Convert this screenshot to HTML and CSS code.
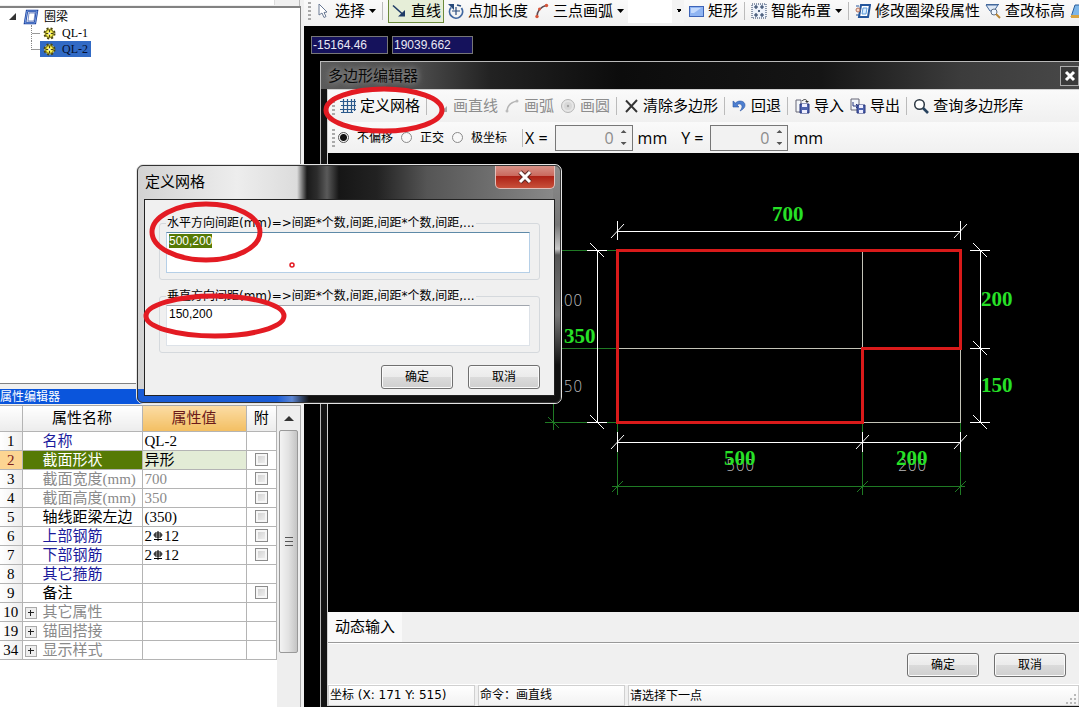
FILE: index.html
```html
<!DOCTYPE html>
<html lang="zh-CN">
<head>
<meta charset="utf-8">
<title>多边形编辑器</title>
<link rel="stylesheet" href="styles.css">
</head>
<body>
<div class="app">
  <aside class="sidebar">
    <div class="top-box"><div class="top-field"></div></div>
    <div class="tree">
      <div class="tree-row tree-root">
        <svg width="10" height="10" viewBox="0 0 10 10"><path d="M8 1v7H1z" fill="#333"/></svg>
        <svg width="16" height="16" viewBox="0 0 16 16"><path d="M4 2h10l-2 12H2z" fill="#fff" stroke="#1d3f9b" stroke-width="2.4"/><path d="M4 2h10l-2 12H2z" fill="none" stroke="#86b4f4" stroke-width=".8"/><path d="M6 4h6l-1 8H5z" fill="#fff" stroke="#2549a8" stroke-width=".6"/></svg>
        <span>圈梁</span>
      </div>
      <div class="tree-row tree-leaf">
        <i class="branch"></i>
        <span class="leaf"><svg width="13" height="13" viewBox="0 0 13 13"><circle cx="6.500" cy="6.500" r="5" fill="#fbf45a" stroke="#4a4510" stroke-width="2" stroke-dasharray="2 2"/><circle cx="6.500" cy="6.500" r="4" fill="#f6ee4b" stroke="#5b5514" stroke-width=".8"/><path d="M6.500 3v7M3 6.500h7" stroke="#4a4510"/><circle cx="6.500" cy="6.500" r="1.200" fill="#fff"/></svg>QL-1</span>
      </div>
      <div class="tree-row tree-leaf">
        <i class="branch"></i>
        <span class="leaf leaf-on"><svg width="13" height="13" viewBox="0 0 13 13"><circle cx="6.500" cy="6.500" r="5" fill="#fbf45a" stroke="#4a4510" stroke-width="2" stroke-dasharray="2 2"/><circle cx="6.500" cy="6.500" r="4" fill="#f6ee4b" stroke="#5b5514" stroke-width=".8"/><path d="M6.500 3v7M3 6.500h7" stroke="#4a4510"/><circle cx="6.500" cy="6.500" r="1.200" fill="#fff"/></svg>QL-2</span>
      </div>
    </div>
    <h2 class="panel-title">属性编辑器</h2>
    <div class="props">
      <table class="grid">
        <colgroup><col class="c-num"><col class="c-name"><col class="c-val"><col class="c-add"></colgroup>
        <thead><tr><th></th><th>属性名称</th><th class="th-on">属性值</th><th>附</th></tr></thead>
        <tbody>
          <tr><th>1</th><td class="name link">名称</td><td>QL-2</td><td></td></tr>
          <tr class="row-on"><th>2</th><td class="name">截面形状</td><td>异形</td><td class="tick"><input type="checkbox" aria-label="截面形状 附"></td></tr>
          <tr class="dim"><th>3</th><td class="name">截面宽度(mm)</td><td>700</td><td class="tick"><input type="checkbox" aria-label="截面宽度 附"></td></tr>
          <tr class="dim"><th>4</th><td class="name">截面高度(mm)</td><td>350</td><td class="tick"><input type="checkbox" aria-label="截面高度 附"></td></tr>
          <tr><th>5</th><td class="name">轴线距梁左边</td><td>(350)</td><td class="tick"><input type="checkbox" aria-label="轴线距梁左边 附"></td></tr>
          <tr><th>6</th><td class="name link">上部钢筋</td><td>2<svg class="rebar" width="12" height="11" viewBox="0 0 12 11"><path d="M3 2h6v4H3zM6 0v10M2 8.500h8M1.500 4h9" fill="none" stroke="#000"/></svg>12</td><td class="tick"><input type="checkbox" aria-label="上部钢筋 附"></td></tr>
          <tr><th>7</th><td class="name link">下部钢筋</td><td>2<svg class="rebar" width="12" height="11" viewBox="0 0 12 11"><path d="M3 2h6v4H3zM6 0v10M2 8.500h8M1.500 4h9" fill="none" stroke="#000"/></svg>12</td><td class="tick"><input type="checkbox" aria-label="下部钢筋 附"></td></tr>
          <tr><th>8</th><td class="name link">其它箍筋</td><td></td><td></td></tr>
          <tr><th>9</th><td class="name">备注</td><td></td><td class="tick"><input type="checkbox" aria-label="备注 附"></td></tr>
          <tr class="dim"><th>10</th><td class="group"><button class="expand" aria-label="展开 其它属性"></button>其它属性</td><td></td><td></td></tr>
          <tr class="dim"><th>19</th><td class="group"><button class="expand" aria-label="展开 锚固搭接"></button>锚固搭接</td><td></td><td></td></tr>
          <tr class="dim"><th>34</th><td class="group"><button class="expand" aria-label="展开 显示样式"></button>显示样式</td><td></td><td></td></tr>
        </tbody>
      </table>
      <div class="scroll">
        <button class="scroll-up" aria-label="向上滚动"></button>
        <div class="thumb"><i></i><i></i><i></i></div>
      </div>
    </div>
  </aside>

  <main class="work">
    <div class="bar main-bar">
      <i class="grip"></i>
      <button class="tool"><svg width="16" height="16" viewBox="0 0 16 16"><path d="M4 1v11l3-2 2 4.500 2-1-2-4 3-.5z" fill="#fff" stroke="#6a7a94"/></svg>选择<i class="caret"></i></button>
      <i class="sep"></i>
      <button class="tool tool-on"><svg width="16" height="16" viewBox="0 0 16 16"><path d="M2 2.500l10 9" stroke="#1f3b66" stroke-width="1.600"/><path d="M14 7v6.500H7z" fill="#1f3b66"/></svg>直线</button>
      <button class="tool"><svg width="16" height="16" viewBox="0 0 16 16"><path d="M3 4.500a6.500 6.500 0 1 0 10.500.5" fill="none" stroke="#3f66a0" stroke-width="1.800"/><path d="M0 1h6v6z" fill="#284a7c"/><path d="M8 4v8M4 8h8" stroke="#284a7c" stroke-width="1.200"/><path d="M9 2l4 1" stroke="#284a7c" stroke-width="1.500"/></svg>点加长度</button>
      <button class="tool"><svg width="16" height="16" viewBox="0 0 16 16"><path d="M4 14C4 8 7 4 14 2" fill="none" stroke="#5d4a52" stroke-width="1.500"/><circle cx="4" cy="13.500" r="1.700" fill="#d8553a"/><circle cx="6.500" cy="6" r="1.500" fill="#d8553a"/><circle cx="13.500" cy="2.500" r="1.700" fill="#d8553a"/></svg>三点画弧<i class="caret"></i></button>
      <select class="combo" aria-label="画法"><option></option></select>
      <button class="tool"><svg width="16" height="16" viewBox="0 0 16 16"><rect x="1.500" y="3.500" width="14" height="10" fill="#8fb4f2" stroke="#3d64b8"/><path d="M3 5h10l-7 5H3z" fill="#c3d9fc"/></svg>矩形</button>
      <i class="sep"></i>
      <button class="tool"><svg width="16" height="16" viewBox="0 0 16 16"><rect x="1" y="1" width="14" height="14" fill="#eef3fb" stroke="#23395d" stroke-dasharray="1 1"/><path d="M5 2v4M3 4h4M11 2v4M9 4h4M5 10v4M3 12h4M11 10v4M9 12h4M8 7v2M7 8h2" stroke="#23395d" stroke-width="1.100"/></svg>智能布置<i class="caret"></i></button>
      <i class="sep"></i>
      <button class="tool"><svg width="16" height="16" viewBox="0 0 16 16"><path d="M6 2h9l-2 12H4z" fill="#fff" stroke="#24569c" stroke-width="2"/><path d="M8 5h4l-1 6H7z" fill="#d8ecff" stroke="#5c9bd8"/><circle cx="3" cy="7" r="2" fill="#f6d9cc" stroke="#b0705a"/><path d="M1 3h3M1 12h3" stroke="#24569c"/></svg>修改圈梁段属性</button>
      <button class="tool"><svg width="16" height="16" viewBox="0 0 16 16"><path d="M1 2h12L9 8H5z" fill="#dfe9f6" stroke="#44699c"/><path d="M1 1.500h13" stroke="#44699c"/><circle cx="9" cy="9" r="3" fill="#eef6ff" stroke="#5d6f87"/><path d="M11 11l4 4" stroke="#b98636" stroke-width="2"/></svg>查改标高</button>
      <button class="tool" aria-label="更多"><svg width="16" height="16" viewBox="0 0 16 16"><path d="M1 14L5 2h8v12z" fill="#7db6e8" stroke="#2b5f9c"/><path d="M1 12h12v3H1z" fill="#d9a441"/></svg></button>
    </div>

    <div class="coords">
      <input type="text" aria-label="X 坐标" value="-15164.46">
      <input type="text" aria-label="Y 坐标" value="19039.662">
    </div>

    <section class="window" aria-label="多边形编辑器">
      <header class="window-head"><h1>多边形编辑器</h1>
        <button class="window-close" aria-label="关闭"><svg width="12" height="12" viewBox="0 0 12 12"><path d="M2 2l8 8M10 2l-8 8" stroke="#fff" stroke-width="3"/></svg></button>
      </header>
      <div class="window-body">
        <div class="bar edit-bar">
          <i class="grip"></i>
          <button class="tool"><svg width="16" height="16" viewBox="0 0 16 16"><path d="M3.500 1v14M7.500 1v14M11.500 1v14M14.500 1v12M0 3.500h16M1 7.500h15M0 11.500h16M1 14.500h12" stroke="#2c5a8c" stroke-width="1.200"/></svg>定义网格</button>
          <i class="sep"></i>
          <button class="tool" disabled><svg width="16" height="16" viewBox="0 0 16 16"><path d="M2 2l10 10" stroke="#aaa" stroke-width="1.500"/><path d="M14 8v6H8z" fill="#aaa"/></svg>画直线</button>
          <button class="tool" disabled><svg width="16" height="16" viewBox="0 0 16 16"><path d="M3 14C3 8 6 4 14 3" fill="none" stroke="#b5b5b5" stroke-width="1.400"/><circle cx="3" cy="13" r="1.500" fill="#bbb"/><circle cx="13" cy="3" r="1.500" fill="#bbb"/></svg>画弧</button>
          <button class="tool" disabled><svg width="16" height="16" viewBox="0 0 16 16"><circle cx="8" cy="8" r="6.500" fill="#e6e6e6" stroke="#b5b5b5"/><circle cx="8" cy="8" r="4" fill="#d8d8d8"/><circle cx="8" cy="8" r="1.200" fill="#a5a5a5"/></svg>画圆</button>
          <i class="sep"></i>
          <button class="tool"><svg width="16" height="16" viewBox="0 0 16 16"><path d="M3 2.500L14 14M14 2L3 14" stroke="#333" stroke-width="1.900"/></svg>清除多边形</button>
          <i class="sep"></i>
          <button class="tool"><svg width="16" height="16" viewBox="0 0 16 16"><path d="M2 3v6h6L6 7c2-2 5-1 5 1.500 0 2-1 3-2 4.500 4-2 5-4 5-6 0-4-6-5.500-9.500-2z" fill="#4d7fd0" stroke="#2d58a5" stroke-width=".6"/></svg>回退</button>
          <i class="sep"></i>
          <button class="tool"><svg width="16" height="16" viewBox="0 0 16 16"><path d="M2 2h5v12H2z" fill="#f3f6fa" stroke="#667"/><path d="M6 6h9v9H6z" fill="#4f63ad" stroke="#29377c"/><path d="M8 6h5v3H8zM8 12h5v3H8z" fill="#eef"/><path d="M8 3c2-2 4-2 5 0" fill="none" stroke="#333"/><path d="M11 3h4l-2 2z" fill="#333"/></svg>导入</button>
          <button class="tool"><svg width="16" height="16" viewBox="0 0 16 16"><path d="M1 1h8v11H1z" fill="#f3f6fa" stroke="#667"/><path d="M3 4v4h4M6 6l2 2-2 2" fill="none" stroke="#29377c"/><path d="M7 7h8v8H7z" fill="#4f63ad" stroke="#29377c"/><path d="M9 7h4v3H9zM9 12h4v3H9z" fill="#eef"/></svg>导出</button>
          <i class="sep"></i>
          <button class="tool"><svg width="16" height="16" viewBox="0 0 16 16"><circle cx="6.500" cy="6.500" r="4.800" fill="#fff" stroke="#2c3742" stroke-width="1.500"/><path d="M10 10l5 5" stroke="#27425e" stroke-width="2.600"/></svg>查询多边形库</button>
        </div>
        <div class="bar offset-bar">
          <i class="grip"></i>
          <label class="radio"><input type="radio" name="offset" checked>不偏移</label>
          <label class="radio"><input type="radio" name="offset">正交</label>
          <label class="radio"><input type="radio" name="offset">极坐标</label>
          <i class="sep"></i>
          <label class="axis" for="off-x">X =</label>
          <span class="spin"><input id="off-x" type="number" value="0"><span class="spin-keys"><i class="up"></i><i class="down"></i></span></span>
          <span class="unit">mm</span>
          <label class="axis axis-y" for="off-y">Y =</label>
          <span class="spin"><input id="off-y" type="number" value="0"><span class="spin-keys"><i class="up"></i><i class="down"></i></span></span>
          <span class="unit">mm</span>
        </div>
        <div class="canvas">
          <svg width="100%" height="100%" viewBox="328 153 751 459" preserveAspectRatio="xMinYMin slice">
            <g class="aux">
              <path d="M553.500 250v180M545 422.500h72M548 417l11 11M545 250.500h72M545 348.500h72"/>
              <path d="M617.500 422v73M862.500 422v73M960.500 422v73M612 486.500h353M612 492l11-11M857 492l11-11M955 492l11-11"/>
            </g>
            <path class="mesh" d="M617 348.500h344M862.500 250v173M960.500 348v75M862 422.500h99"/>
            <g class="dims">
              <path d="M617.500 221v19M960.500 221v19M617 231.500h344M611 238l13-14M954 238l13-14"/>
              <path d="M597.500 250v173M587 250.500h20M587 422.500h20M590 243l14 14M590 415l14 14"/>
              <path d="M980.500 250v173M970 250.500h20M970 348.500h20M970 422.500h20M973 243l14 14M973 341l14 14M973 415l14 14"/>
              <path d="M617.500 432v20M862.500 432v20M960.500 432v20M617 442.500h344M611 449l13-14M856 449l13-14M954 449l13-14"/>
            </g>
            <path class="shape" d="M617.500 250.500h343v98h-98v74h-245z"/>
            <g class="small-num"><text x="554" y="306">200</text><text x="554" y="392">150</text><text x="726" y="471">500</text><text x="898" y="471">200</text></g>
            <g class="big-num"><text x="772" y="221">700</text><text x="564" y="343">350</text><text x="981" y="306">200</text><text x="981" y="392">150</text><text x="724" y="465">500</text><text x="896" y="465">200</text></g>
          </svg>
        </div>
        <div class="dyn-bar"><button class="dyn">动态输入</button></div>
        <div class="actions"><button class="btn">确定</button><button class="btn">取消</button></div>
        <footer class="status"><span>坐标 (X: 171 Y: 515)</span><span>命令：画直线</span><span class="status-tail">请选择下一点<svg width="11" height="11" viewBox="0 0 11 11"><path d="M8 0h2v2H8zM4 4h2v2H4zM8 4h2v2H8zM0 8h2v2H0zM4 8h2v2H4zM8 8h2v2H8z" fill="#b8b8b8"/></svg></span></footer>
      </div>
    </section>
  </main>

  <section class="dialog" role="dialog" aria-label="定义网格">
    <header class="dialog-head"><h2>定义网格</h2>
      <button class="dialog-close" aria-label="关闭"><svg width="16" height="14" viewBox="0 0 16 14"><path d="M3 2l10 10M13 2L3 12" stroke="#5c2a26" stroke-width="5"/><path d="M3 2l10 10M13 2L3 12" stroke="#fff" stroke-width="3"/></svg></button>
    </header>
    <div class="dialog-body">
      <fieldset><legend><label for="gap-h">水平方向间距(mm)=&gt;间距*个数,间距,间距*个数,间距,...</label></legend>
        <textarea id="gap-h" class="field-on" spellcheck="false">500,200</textarea></fieldset>
      <fieldset><legend><label for="gap-v">垂直方向间距(mm)=&gt;间距*个数,间距,间距*个数,间距,...</label></legend>
        <textarea id="gap-v" spellcheck="false">150,200</textarea></fieldset>
      <div class="dialog-actions"><button class="btn">确定</button><button class="btn">取消</button></div>
    </div>
  </section>

  <svg class="marks" width="600" height="400" viewBox="0 0 600 400" aria-hidden="true">
    <g fill="none" stroke="#e31b23" stroke-width="5"><ellipse cx="384" cy="110" rx="58" ry="21"/><ellipse cx="206" cy="232" rx="54" ry="28"/><ellipse cx="215" cy="316" rx="69" ry="20"/></g>
    <circle cx="292" cy="265" r="2" fill="none" stroke="#e31b23" stroke-width="1.500"/>
  </svg>
</div>
<script src="select.js"></script>
</body>
</html>
```

FILE: select.js
```js
const field = document.getElementById("gap-h");
field.focus({ preventScroll: true });
field.select();
```

FILE: styles.css
```css
* { box-sizing: border-box; }

body {
  margin: 0;
  font: 12px/16px "Liberation Sans", "Noto Sans CJK SC", sans-serif;
  color: #000;
}

button, input, select, textarea { font: inherit; color: inherit; margin: 0; }
button { padding: 0; border: 0; background: none; white-space: nowrap; }
h1, h2 { margin: 0; font-weight: normal; }
svg { flex: none; display: block; }

.app {
  position: relative;
  display: flex;
  height: 100vh;
  overflow: hidden;
  background: #000;
}

/* Left column */
.sidebar {
  flex: none;
  width: 304px;
  display: flex;
  flex-direction: column;
  background: #f0f0f0;
}
.top-box { height: 6px; border-right: 1px solid #bbb; margin-right: 4px; }
.top-field { width: 275px; height: 5px; background: #fff; border-right: 1px solid #ddd; }
.tree {
  flex: 1;
  margin-right: 3px;
  padding-top: 1px;
  background: #fff;
  border: solid #828282;
  border-width: 2px 1px 1px 0;
}
.tree-row { display: flex; align-items: center; height: 16px; }
.tree-root { padding-left: 8px; gap: 5px; }
.tree-leaf { padding-left: 31px; font-family: "Liberation Serif", serif; }
.branch { width: 9px; height: 16px; border-left: 1px dotted #888; background: linear-gradient(#999, #999) 0 8px / 9px 1px no-repeat; }
.tree-leaf:last-child .branch { height: 9px; align-self: flex-start; }
.leaf { display: flex; align-items: center; gap: 6px; height: 16px; padding: 0 3px; }
.leaf-on { background: #316ac5; color: #06102e; }

.panel-title {
  margin-top: 5px;
  height: 15px;
  font-size: 12px;
  line-height: 16px;
  background: #0a55dc;
  color: #fff;
  margin-right: 3px;
}
.props {
  display: flex;
  height: 302px;
  margin: 1px 3px 0 0;
  border: solid #aaa;
  border-width: 1px 1px 0 0;
  background: #fff;
}
.grid {
  flex: none;
  width: 277px;
  align-self: flex-start;
  table-layout: fixed;
  border-collapse: collapse;
  font: 15px/18px "Liberation Serif", "Noto Sans CJK SC", serif;
}
.c-num { width: 22px; }
.c-name { width: 120px; }
.c-val { width: 104px; }
.grid th, .grid td { height: 19px; padding: 0 0 0 2px; border: solid #b4b4b4; border-width: 0 1px 1px 0; white-space: nowrap; text-align: left; overflow: hidden; }
.grid th { padding: 0; font-weight: normal; text-align: center; background: linear-gradient(90deg, #fff, #ededed); }
.grid thead th { height: 25px; background: linear-gradient(#fff, #ececec); }
.grid thead .th-on { background: linear-gradient(#fbdca4, #f3bf63); color: #6b1a1a; }
.grid td.name { padding-left: 20px; }
.grid .link { color: #1a1a9c; }
.grid .dim td { color: #8a8a8a; }
.grid .row-on th { background: #fcd592; color: #7b2020; }
.grid .row-on td { background: #e3ecd6; }
.grid .row-on td.name { background: #567a05; color: #fff; }
.grid .row-on td.tick { background: #fff; }
.grid td.tick { padding: 0; text-align: center; }
.tick input {
  appearance: none;
  display: block;
  width: 13px;
  height: 13px;
  margin: 0 auto;
  border: 1px solid #8c8c8c;
  outline: 2px solid #f6f6f6;
  outline-offset: -3px;
  background: linear-gradient(135deg, #ccc, #f5f5f5);
}
.rebar { display: inline-block; vertical-align: -1px; }
.group .expand {
  width: 12px;
  height: 12px;
  margin-right: 6px;
  vertical-align: -1px;
  border: 1px solid #aaa;
  background: linear-gradient(#222, #222) center / 6px 1px no-repeat, linear-gradient(#222, #222) center / 1px 6px no-repeat, #eee;
}
.scroll { flex: 1; background: #eee; display: flex; flex-direction: column; padding: 0 2px; }
.scroll-up { height: 24px; }
.scroll-up::before { content: ""; display: block; width: 0; margin: 0 auto; border: 5px solid transparent; border-top: 0; border-bottom-color: #333; }
.thumb {
  height: 223px;
  display: flex;
  flex-direction: column;
  align-items: center;
  justify-content: center;
  gap: 3px;
  border: 1px solid #999;
  border-radius: 2px;
  background: linear-gradient(90deg, #f3f3f3, #e2e2e2 50%, #c4c4c4);
}
.thumb i { width: 8px; height: 1px; background: #555; }

/* Toolbars */
.work { position: relative; flex: 1; min-width: 0; background: #000; }
.bar {
  display: flex;
  align-items: center;
  padding-left: 4px;
  background: linear-gradient(#fafafa, #f0f0f0);
  overflow: hidden;
}
.bar > * { flex: none; }
.main-bar { height: 26px; gap: 3px; padding-bottom: 4px; }
.edit-bar { height: 32px; gap: 4px; }
.grip { width: 3px; height: 18px; background: repeating-linear-gradient(#aaa 0 2px, transparent 2px 4px); }
.sep { width: 1px; height: 18px; margin: 0 2px; background: #bbb; }
.edit-bar .sep { margin: 0 1px; }
.tool { display: flex; align-items: center; gap: 4px; height: 24px; padding: 0 1px; font-size: 15px; line-height: 22px; }
.tool:disabled { color: #8d8d8d; }
.tool-on { padding: 0 2px; border: 1px solid #6c8a3a; background: #e6eed8; }
.caret { width: 7px; height: 4px; background: #000; clip-path: polygon(0 0, 100% 0, 50% 100%); }
.combo {
  appearance: none;
  width: 56px;
  height: 23px;
  border: 0;
  background: linear-gradient(45deg, transparent 50%, #000 50%) 48px 9px / 3px 3px no-repeat, linear-gradient(-45deg, transparent 50%, #000 50%) 51px 9px / 3px 3px no-repeat, linear-gradient(90deg, #fff 44px, #f4f4f4 44px);
}
.coords { display: flex; gap: 4px; padding: 10px 7px; }
.coords input { width: 77px; height: 18px; padding: 0 1px; border: 1px solid #777; background: #15125c; color: #e8e8f4; }
.coords input + input { width: 81px; }

/* Polygon editor window */
.window {
  position: absolute;
  inset: 61px 0 0 16px;
  display: flex;
  flex-direction: column;
  padding: 0 0 1px 6px;
  border: solid #b9b9b9;
  border-width: 1px 0 0 1px;
  background: #141414;
}
.window-head {
  display: flex;
  align-items: center;
  justify-content: space-between;
  height: 27px;
  margin-left: -6px;
  padding-left: 7px;
  background: linear-gradient(90deg, #5b5b5b, #4a4a4a 100px, #222 170px, #0c0c0c 300px, #151515 500px, #3c3c3c 640px, #484848);
}
.window-head h1 { font-size: 15px; line-height: 24px; color: #0a0a0a; text-shadow: 0 0 6px #999, 0 0 8px #888; }
.window-close { display: flex; align-items: center; justify-content: center; width: 19px; height: 20px; border: 1px solid #aaa; background: #3a3a3a; }
.window-body { flex: 1; min-height: 0; display: flex; flex-direction: column; border: solid #d0d0d0; border-width: 1px 0 0 1px; background: #f0f0f0; }
.offset-bar { height: 31px; font: 16px/20px "Open Sans", "Noto Sans CJK SC", sans-serif; }
.offset-bar .grip { margin-right: 3px; }
.radio { display: flex; align-items: center; gap: 8px; margin-right: 8px; font-size: 12px; }
.radio input { appearance: none; width: 11px; height: 11px; border: 1px solid #8a8a8a; border-radius: 50%; background: #f8f8f8; }
.radio input:checked { border-color: #555; background: radial-gradient(circle, #111 0 3px, #f8f8f8 4px); }
.offset-bar .sep { margin: 0 2px 0 7px; }
.spin { display: flex; align-items: center; width: 78px; height: 26px; margin: 0 5px 0 7px; border: 1px solid #777; background: #f2f2f2; }
.spin input { flex: 1; min-width: 0; border: 0; background: none; text-align: right; color: #8c8c8c; appearance: textfield; }
.spin input::-webkit-inner-spin-button { display: none; }
.spin-keys { display: flex; flex-direction: column; gap: 9px; width: 16px; padding-left: 5px; }
.up, .down { width: 6px; height: 3px; background: #555; clip-path: polygon(0 100%, 50% 0, 100% 100%); }
.down { clip-path: polygon(0 0, 100% 0, 50% 100%); }
.axis-y { margin-left: 14px; }
.canvas { flex: 1; min-height: 0; background: #000; }
.canvas path { fill: none; }
.aux { stroke: #1f7a24; }
.mesh { stroke: #c4c4b8; }
.dims { stroke: #fff; }
.canvas .shape { stroke: #d91a1a; stroke-width: 3; }
.big-num { font: bold 21px "Liberation Serif", serif; fill: #27e127; stroke: none; }
.small-num { font: 15px "DejaVu Sans", sans-serif; font-weight: 200; fill: #b8b8b8; stroke: none; }
.dyn-bar { height: 31px; border-bottom: 1px solid #999; }
.dyn { height: 30px; padding: 0 7px; background: #f9f9f9; font-size: 15px; }
.actions { display: flex; justify-content: flex-end; gap: 15px; height: 41px; padding: 9px 13px 0 0; border-top: 1px solid #fff; }
.btn {
  width: 72px;
  height: 24px;
  border: 1px solid #707070;
  border-radius: 3px;
  background: linear-gradient(#f3f3f3, #ebebeb 50%, #dbdbdb 50%, #cfcfcf);
  box-shadow: inset 0 0 0 1px #fafafa;
}
.status { display: flex; gap: 3px; height: 22px; border-top: 1px solid #fff; font: 12px/18px "DejaVu Sans", "Noto Sans CJK SC", sans-serif; }
.status span { width: 147px; padding: 0 1px; border: 1px solid #d0d0d0; background: linear-gradient(#fff, #f2f2f2); }
.status .status-tail { flex: 1; display: flex; justify-content: space-between; align-items: flex-end; }

/* Grid dialog */
.dialog {
  position: absolute;
  left: 136px;
  top: 164px;
  width: 426px;
  padding: 0 6px 7px 7px;
  border: 1px solid #e4e4e4;
  border-radius: 7px;
  outline: 1px solid #333;
  outline-offset: -2px;
  background:
    linear-gradient(90deg, #1a5cd6 140px, #5c86d4 155px, #111 172px, #111) 0 100% / 100% 14px no-repeat,
    linear-gradient(#8c8c8c, #777 60px, #c8c8c8 84px, #555 90px, #777 150px, #111 200px) 100% 0 / 8px 100% no-repeat,
    linear-gradient(90deg, #d2d2d2, #ededed 100px, #dcdcdc 160px, #1a1a1a 170px, #2c2c2c 180px, #5a5a5a 190px, #161616 202px, #222 240px, #555 290px, #6d6d6d 350px, #8c8c8c);
}
.dialog-head { display: flex; align-items: flex-start; justify-content: space-between; height: 34px; }
.dialog-head h2 { padding: 6px 1px; font-size: 15px; line-height: 22px; }
.dialog-close {
  display: flex;
  align-items: center;
  justify-content: center;
  width: 60px;
  height: 24px;
  border: 1px solid #e3c0bb;
  border-top: 0;
  border-radius: 0 0 5px 5px;
  background: linear-gradient(#d9968c, #c9685c 48%, #ad2216 50%, #c8503a);
}
.dialog-body { padding: 16px 14px 6px; border: 1px solid #222; background: #f0f0f0; }
fieldset { min-width: 0; margin: 0 0 9px; padding: 2px 9px 6px 6px; border: 1px solid #d5d9dd; border-radius: 3px; }
legend { padding: 0 1px; font: 12px/14px "DejaVu Sans", "Noto Sans CJK SC", sans-serif; }
legend label { display: block; height: 14px; white-space: nowrap; }
textarea {
  display: block;
  width: 100%;
  height: 41px;
  padding: 1px 2px;
  line-height: 14px;
  resize: none;
  outline: 0;
  border: 1px solid #dde2e8;
  border-top-color: #a0a5ad;
  background: #fff;
}
.field-on { border-color: #5e8aa8 #b5cfe7 #b5cfe7; caret-color: transparent; }
textarea::selection { background: #567a05; color: #fff; }
.dialog-actions { display: flex; justify-content: flex-end; gap: 15px; padding-top: 3px; }

.marks { position: absolute; left: 0; top: 0; pointer-events: none; }
```
